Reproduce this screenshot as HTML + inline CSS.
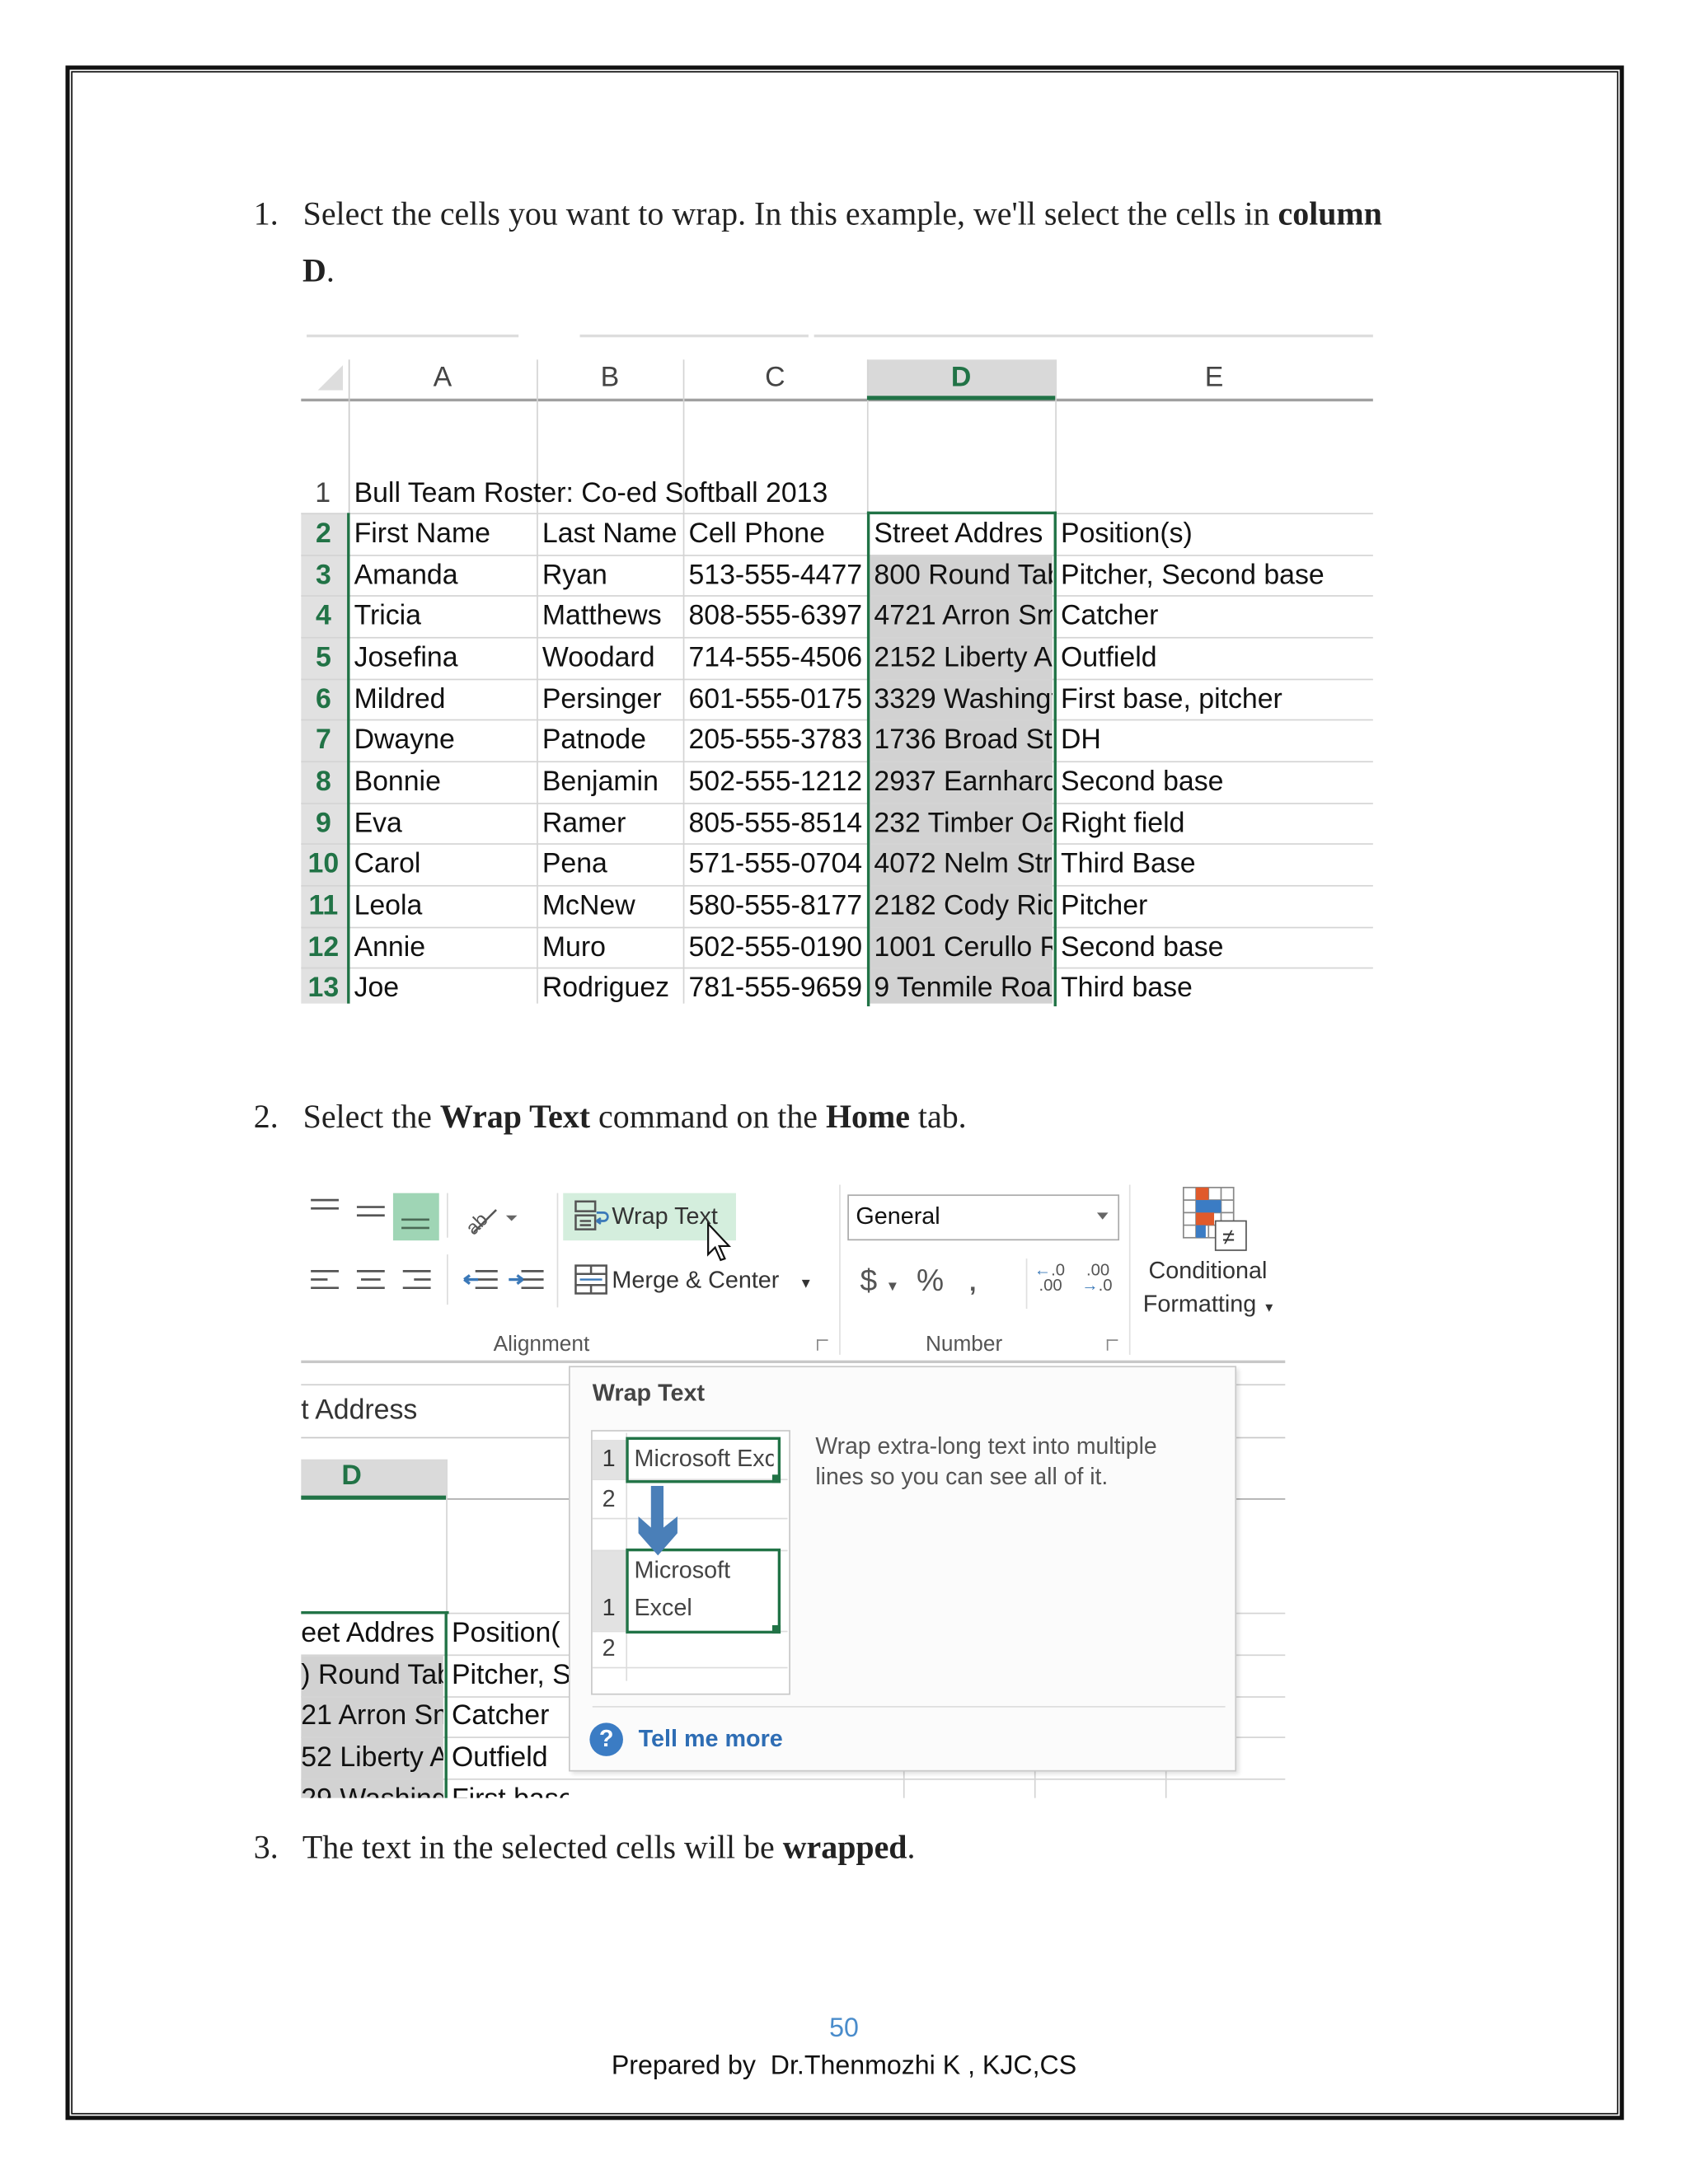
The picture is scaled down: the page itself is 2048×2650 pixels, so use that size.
<!DOCTYPE html>
<html><head><meta charset="utf-8">
<style>
html,body{margin:0;padding:0;background:#fff;}
body{width:2048px;height:2650px;overflow:hidden;position:relative;}
#c{position:absolute;left:0;top:0;width:1211px;height:1567px;transform:scale(1.6912);transform-origin:0 0;}
.a{position:absolute;white-space:nowrap;}
.s{font-family:"Liberation Serif",serif;font-size:23.6px;color:#222;}
.x{font-family:"Liberation Sans",sans-serif;font-size:20px;color:#111;line-height:29.7px;}
.x > div > span:nth-child(5){width:128px;overflow:hidden}
.h{background:#bbb;position:absolute;}
.g{color:#217346;font-weight:bold;}
.rib{font-family:"Liberation Sans",sans-serif;font-size:17px;color:#333;}
</style></head><body><div id="c">
<!-- border -->
<div class="a" style="left:47px;top:47px;width:1112px;height:1468px;border:3px solid #111;"></div>
<div class="a" style="left:51px;top:51px;width:1108px;height:1464px;border:1px solid #111;"></div>

<div class="a s" style="left:182px;top:141px;">1.&nbsp;&nbsp; Select the cells you want to wrap. In this example, we'll select the cells in <b>column</b></div>
<div class="a s" style="left:217px;top:182px;"><b>D</b>.</div>

<!-- spreadsheet 1 -->
<div class="h" style="left:220px;top:240px;width:152px;height:2px;background:#ddd"></div>
<div class="h" style="left:416px;top:240px;width:164px;height:2px;background:#ddd"></div>
<div class="h" style="left:584px;top:240px;width:401px;height:2px;background:#ddd"></div>
<div class="a" style="left:216px;top:368px;width:34px;height:352px;background:#e1e1e1"></div>
<div class="a" style="left:622px;top:258px;width:135px;height:28px;background:#d9d9d9"></div>
<div class="a" style="left:624px;top:398px;width:131px;height:322px;background:#d2d2d2"></div>
<div class="a" style="left:228px;top:262px;width:0;height:0;border-left:18px solid transparent;border-bottom:18px solid #ddd"></div>
<div class="h" style="left:216px;top:286px;width:769px;height:2px;background:#a0a0a0"></div>
<div class="h" style="left:250px;top:258px;width:1px;height:462px;background:#ccc"></div>
<div class="h" style="left:385px;top:258px;width:1px;height:462px;background:#d4d4d4"></div>
<div class="h" style="left:490px;top:258px;width:1px;height:462px;background:#d4d4d4"></div>
<div class="h" style="left:622px;top:258px;width:1px;height:110px;background:#d4d4d4"></div>
<div class="h" style="left:757px;top:258px;width:1px;height:110px;background:#d4d4d4"></div>
<div class="h" style="left:622px;top:284px;width:135px;height:3px;background:#217346"></div>
<div class="a x" style="left:250px;top:257px;width:135px;text-align:center;color:#444">A</div>
<div class="a x" style="left:385px;top:257px;width:105px;text-align:center;color:#444">B</div>
<div class="a x" style="left:490px;top:257px;width:132px;text-align:center;color:#444">C</div>
<div class="a x g" style="left:622px;top:257px;width:135px;text-align:center;">D</div>
<div class="a x" style="left:757px;top:257px;width:228px;text-align:center;color:#444">E</div>
<!-- row lines -->
<div class="h" style="left:216px;top:368px;width:769px;height:1px;background:#d4d4d4"></div>
<div class="h" style="left:216px;top:398px;width:769px;height:1px;background:#d4d4d4"></div>
<div class="h" style="left:216px;top:427px;width:769px;height:1px;background:#d4d4d4"></div>
<div class="h" style="left:216px;top:457px;width:769px;height:1px;background:#d4d4d4"></div>
<div class="h" style="left:216px;top:487px;width:769px;height:1px;background:#d4d4d4"></div>
<div class="h" style="left:216px;top:516px;width:769px;height:1px;background:#d4d4d4"></div>
<div class="h" style="left:216px;top:546px;width:769px;height:1px;background:#d4d4d4"></div>
<div class="h" style="left:216px;top:576px;width:769px;height:1px;background:#d4d4d4"></div>
<div class="h" style="left:216px;top:605px;width:769px;height:1px;background:#d4d4d4"></div>
<div class="h" style="left:216px;top:635px;width:769px;height:1px;background:#d4d4d4"></div>
<div class="h" style="left:216px;top:665px;width:769px;height:1px;background:#d4d4d4"></div>
<div class="h" style="left:216px;top:694px;width:769px;height:1px;background:#d4d4d4"></div>
<div class="h" style="left:249px;top:368px;width:2px;height:352px;background:#217346"></div>
<div class="a" style="left:622px;top:367px;width:132px;height:353px;border:2px solid #217346;border-bottom:none"></div>
<div class="a x" style="left:226px;top:340px;color:#444">1</div>
<div class="a x" style="left:254px;top:340px;">Bull Team Roster: Co-ed Softball 2013</div>
<div class="a x" style="left:216px;top:369px;"><div style="position:relative"><span class="a g" style="left:0;width:32px;text-align:center">2</span><span class="a" style="left:38px">First Name</span><span class="a" style="left:173px">Last Name</span><span class="a" style="left:278px">Cell Phone</span><span class="a" style="left:411px">Street Addres</span><span class="a" style="left:545px">Position(s)</span></div></div>
<div class="a x" style="left:216px;top:399px;"><div style="position:relative"><span class="a g" style="left:0;width:32px;text-align:center">3</span><span class="a" style="left:38px">Amanda</span><span class="a" style="left:173px">Ryan</span><span class="a" style="left:278px">513-555-4477</span><span class="a" style="left:411px">800 Round Tab</span><span class="a" style="left:545px">Pitcher, Second base</span></div></div>
<div class="a x" style="left:216px;top:428px;"><div style="position:relative"><span class="a g" style="left:0;width:32px;text-align:center">4</span><span class="a" style="left:38px">Tricia</span><span class="a" style="left:173px">Matthews</span><span class="a" style="left:278px">808-555-6397</span><span class="a" style="left:411px">4721 Arron Sm</span><span class="a" style="left:545px">Catcher</span></div></div>
<div class="a x" style="left:216px;top:458px;"><div style="position:relative"><span class="a g" style="left:0;width:32px;text-align:center">5</span><span class="a" style="left:38px">Josefina</span><span class="a" style="left:173px">Woodard</span><span class="a" style="left:278px">714-555-4506</span><span class="a" style="left:411px">2152 Liberty A</span><span class="a" style="left:545px">Outfield</span></div></div>
<div class="a x" style="left:216px;top:488px;"><div style="position:relative"><span class="a g" style="left:0;width:32px;text-align:center">6</span><span class="a" style="left:38px">Mildred</span><span class="a" style="left:173px">Persinger</span><span class="a" style="left:278px">601-555-0175</span><span class="a" style="left:411px">3329 Washingt</span><span class="a" style="left:545px">First base, pitcher</span></div></div>
<div class="a x" style="left:216px;top:517px;"><div style="position:relative"><span class="a g" style="left:0;width:32px;text-align:center">7</span><span class="a" style="left:38px">Dwayne</span><span class="a" style="left:173px">Patnode</span><span class="a" style="left:278px">205-555-3783</span><span class="a" style="left:411px">1736 Broad Str</span><span class="a" style="left:545px">DH</span></div></div>
<div class="a x" style="left:216px;top:547px;"><div style="position:relative"><span class="a g" style="left:0;width:32px;text-align:center">8</span><span class="a" style="left:38px">Bonnie</span><span class="a" style="left:173px">Benjamin</span><span class="a" style="left:278px">502-555-1212</span><span class="a" style="left:411px">2937 Earnhard</span><span class="a" style="left:545px">Second base</span></div></div>
<div class="a x" style="left:216px;top:577px;"><div style="position:relative"><span class="a g" style="left:0;width:32px;text-align:center">9</span><span class="a" style="left:38px">Eva</span><span class="a" style="left:173px">Ramer</span><span class="a" style="left:278px">805-555-8514</span><span class="a" style="left:411px">232 Timber Oa</span><span class="a" style="left:545px">Right field</span></div></div>
<div class="a x" style="left:216px;top:606px;"><div style="position:relative"><span class="a g" style="left:0;width:32px;text-align:center">10</span><span class="a" style="left:38px">Carol</span><span class="a" style="left:173px">Pena</span><span class="a" style="left:278px">571-555-0704</span><span class="a" style="left:411px">4072 Nelm Str</span><span class="a" style="left:545px">Third Base</span></div></div>
<div class="a x" style="left:216px;top:636px;"><div style="position:relative"><span class="a g" style="left:0;width:32px;text-align:center">11</span><span class="a" style="left:38px">Leola</span><span class="a" style="left:173px">McNew</span><span class="a" style="left:278px">580-555-8177</span><span class="a" style="left:411px">2182 Cody Rid</span><span class="a" style="left:545px">Pitcher</span></div></div>
<div class="a x" style="left:216px;top:666px;"><div style="position:relative"><span class="a g" style="left:0;width:32px;text-align:center">12</span><span class="a" style="left:38px">Annie</span><span class="a" style="left:173px">Muro</span><span class="a" style="left:278px">502-555-0190</span><span class="a" style="left:411px">1001 Cerullo R</span><span class="a" style="left:545px">Second base</span></div></div>
<div class="a" style="left:216px;top:695px;width:769px;height:25px;overflow:hidden"><div class="x"><div style="position:relative"><span class="a g" style="left:0;width:32px;text-align:center">13</span><span class="a" style="left:38px">Joe</span><span class="a" style="left:173px">Rodriguez</span><span class="a" style="left:278px">781-555-9659</span><span class="a" style="left:411px">9 Tenmile Roa</span><span class="a" style="left:545px">Third base</span></div></div></div>

<div class="a s" style="left:182px;top:789px;">2.&nbsp;&nbsp; Select the <b>Wrap Text</b> command on the <b>Home</b> tab.</div>

<!-- ribbon -->
<div class="a" style="left:282px;top:856px;width:33px;height:34px;background:#9fd5b5"></div>
<div class="a" style="left:404px;top:856px;width:124px;height:34px;background:#d4eedd"></div>
<svg class="a" style="left:216px;top:848px" width="400" height="100" viewBox="0 0 400 100">
<g stroke="#555" stroke-width="1.6">
<path d="M7 13h20M7 19h20"/><path d="M40 18h20M40 24h20"/><path d="M72 27h20M72 33h20" stroke="#4a6a55"/>
<path d="M7 64h20M7 70h12M7 76h20"/><path d="M40 64h20M43 70h14M40 76h20"/><path d="M73 64h20M81 70h12M73 76h20"/>
<path d="M125 64h16M125 70h16M125 76h16"/><path d="M158 64h16M158 70h16M158 76h16"/>
</g>
<path d="M117 70h10M117 70l4-3M117 70l4 3" stroke="#3a78b8" stroke-width="2" fill="none"/>
<path d="M149 70h10M159 70l-4-3M159 70l-4 3" stroke="#3a78b8" stroke-width="2" fill="none"/>
<text x="116" y="32" font-family="Liberation Sans" font-size="14" fill="#555" transform="rotate(-45 128 26)">ab</text>
<path d="M124 36l16-16" stroke="#555" stroke-width="1.5"/>
<path d="M147 24l4 4 4-4z" fill="#666"/>
<line x1="105" y1="8" x2="105" y2="40" stroke="#ddd"/><line x1="105" y1="52" x2="105" y2="88" stroke="#ddd"/>
<line x1="184" y1="8" x2="184" y2="90" stroke="#ddd"/>
<g stroke="#555" stroke-width="1.5" fill="none">
<rect x="197" y="14" width="14" height="7"/><rect x="197" y="24" width="14" height="10"/><path d="M200 28h8M200 31h8"/>
<rect x="197" y="60" width="22" height="20"/><path d="M197 66h22M197 74h22M208 60v6M208 74v6"/>
</g>
<path d="M212 22h5a3 3 0 0 1 0 6h-5M212 28l3-2M212 28l3 2" stroke="#3a78b8" stroke-width="1.6" fill="none"/>
<path d="M200 70h16" stroke="#3a78b8" stroke-width="1.4"/>
</svg>
<div class="a rib" style="left:439px;top:863px;">Wrap Text</div>
<div class="a rib" style="left:439px;top:909px;">Merge &amp; Center&nbsp;&nbsp;&nbsp;<span style="font-size:10px">▼</span></div>
<svg class="a" style="left:506px;top:876px" width="24" height="34"><path d="M2 2v22l5-5 4 9 3-1-4-9h7z" fill="#fff" stroke="#111" stroke-width="1.3"/></svg>
<div class="a rib" style="left:354px;top:956px;font-size:15.5px;color:#555">Alignment</div>
<div class="a rib" style="left:664px;top:956px;font-size:15.5px;color:#555">Number</div>
<div class="a" style="left:586px;top:961px;width:7px;height:7px;border-left:1px solid #888;border-top:1px solid #888"></div>
<div class="a" style="left:794px;top:961px;width:7px;height:7px;border-left:1px solid #888;border-top:1px solid #888"></div>
<div class="a" style="left:602px;top:850px;width:1px;height:122px;background:#e0e0e0"></div>
<div class="a" style="left:810px;top:850px;width:1px;height:122px;background:#e0e0e0"></div>
<div class="a" style="left:736px;top:903px;width:1px;height:36px;background:#e0e0e0"></div>
<div class="a" style="left:608px;top:857px;width:193px;height:31px;border:1px solid #aaa;background:#fff"></div>
<div class="a rib" style="left:614px;top:863px;color:#111">General</div>
<div class="a" style="left:787px;top:870px;border-left:4px solid transparent;border-right:4px solid transparent;border-top:5px solid #666"></div>
<div class="a rib" style="left:617px;top:906px;font-size:22px;color:#555">$ <span style="font-size:10px">▼</span>&nbsp;&nbsp;%&nbsp;&nbsp;&nbsp;<b style="font-size:18px">,</b></div>
<div class="a" style="left:742px;top:906px;font-family:'Liberation Sans';font-size:12px;line-height:11px;color:#555"><span style="color:#3a78b8">←</span>.0<br>&nbsp;.00</div>
<div class="a" style="left:776px;top:906px;font-family:'Liberation Sans';font-size:12px;line-height:11px;color:#555">&nbsp;.00<br><span style="color:#3a78b8">→</span>.0</div>
<svg class="a" style="left:848px;top:851px" width="50" height="48">
<g fill="none" stroke="#888" stroke-width="1"><rect x="1" y="1" width="36" height="36"/><path d="M1 10h36M1 19h36M1 28h36M10 1v36M19 1v36M28 1v36"/></g>
<rect x="10" y="1" width="9" height="9" fill="#e05a2b"/><rect x="10" y="10" width="18" height="9" fill="#3b7cc4"/><rect x="10" y="19" width="13" height="9" fill="#e05a2b"/><rect x="10" y="28" width="7" height="9" fill="#3b7cc4"/>
<rect x="24" y="25" width="22" height="21" fill="#fff" stroke="#555"/><text x="29" y="42" font-family="Liberation Sans" font-size="16" fill="#333">≠</text>
</svg>
<div class="a rib" style="left:824px;top:902px;">Conditional</div>
<div class="a rib" style="left:820px;top:926px;">Formatting <span style="font-size:9px">▼</span></div>

<!-- lower sheet -->
<div class="h" style="left:216px;top:976px;width:706px;height:2px;background:#c8c8c8"></div>
<div class="h" style="left:216px;top:993px;width:706px;height:1px;background:#d0d0d0"></div>
<div class="h" style="left:216px;top:1031px;width:706px;height:1px;background:#c8c8c8"></div>
<div class="a x" style="left:216px;top:998px;color:#333">t Address</div>
<div class="a" style="left:216px;top:1047px;width:104px;height:27px;background:#dadada"></div>
<div class="h" style="left:216px;top:1073px;width:104px;height:3px;background:#217346"></div>
<div class="h" style="left:320px;top:1075px;width:602px;height:1px;background:#aaa"></div>
<div class="a x g" style="left:245px;top:1045px;">D</div>
<div class="h" style="left:320px;top:1047px;width:1px;height:110px;background:#d4d4d4"></div>
<div class="a" style="left:216px;top:1188px;width:102px;height:102px;background:#d2d2d2"></div>
<div class="h" style="left:216px;top:1157px;width:706px;height:1px;background:#d4d4d4"></div>
<div class="h" style="left:216px;top:1187px;width:706px;height:1px;background:#d4d4d4"></div>
<div class="h" style="left:216px;top:1217px;width:706px;height:1px;background:#d4d4d4"></div>
<div class="h" style="left:216px;top:1246px;width:706px;height:1px;background:#d4d4d4"></div>
<div class="h" style="left:216px;top:1276px;width:706px;height:1px;background:#d4d4d4"></div>
<div class="a" style="left:216px;top:1158px;width:192px;height:132px;overflow:hidden">
<div class="x" style="position:relative">
<span class="a" style="left:0;top:0;width:102px;overflow:hidden">eet Addres</span><span class="a" style="left:108px;top:0">Position(</span>
<span class="a" style="left:0;top:30px;width:102px;overflow:hidden">) Round Tab</span><span class="a" style="left:108px;top:30px">Pitcher, S</span>
<span class="a" style="left:0;top:59px;width:102px;overflow:hidden">21 Arron Sm</span><span class="a" style="left:108px;top:59px">Catcher</span>
<span class="a" style="left:0;top:89px;width:102px;overflow:hidden">52 Liberty A</span><span class="a" style="left:108px;top:89px">Outfield</span>
<span class="a" style="left:0;top:119px;width:102px;overflow:hidden">29 Washingt</span><span class="a" style="left:108px;top:119px">First base, pitcher</span>
</div></div>
<div class="h" style="left:216px;top:1156px;width:106px;height:2px;background:#217346"></div>
<div class="h" style="left:319px;top:1156px;width:2px;height:134px;background:#217346"></div>
<div class="h" style="left:648px;top:1270px;width:1px;height:20px;background:#d4d4d4"></div>
<div class="h" style="left:742px;top:1270px;width:1px;height:20px;background:#d4d4d4"></div>
<div class="h" style="left:836px;top:1270px;width:1px;height:20px;background:#d4d4d4"></div>

<!-- tooltip -->
<div class="a" style="left:408px;top:980px;width:477px;height:289px;background:#fbfbfb;border:1px solid #c9c9c9;box-shadow:2px 2px 3px rgba(0,0,0,0.12)"></div>
<div class="a rib" style="left:425px;top:990px;font-weight:bold;color:#444">Wrap Text</div>
<div class="a" style="left:424px;top:1026px;width:141px;height:188px;border:1px solid #c8c8c8;background:#fff"></div>
<div class="a" style="left:425px;top:1033px;width:24px;height:28px;background:#e2e2e2"></div>
<div class="a" style="left:425px;top:1112px;width:24px;height:58px;background:#e2e2e2"></div>
<div class="h" style="left:425px;top:1061px;width:140px;height:1px;background:#ddd"></div>
<div class="h" style="left:425px;top:1089px;width:140px;height:1px;background:#ddd"></div>
<div class="h" style="left:425px;top:1112px;width:140px;height:1px;background:#ddd"></div>
<div class="h" style="left:425px;top:1170px;width:140px;height:1px;background:#ddd"></div>
<div class="h" style="left:425px;top:1196px;width:140px;height:1px;background:#ddd"></div>
<div class="h" style="left:449px;top:1028px;width:1px;height:178px;background:#ddd"></div>
<div class="a" style="left:449px;top:1031px;width:107px;height:29px;border:2px solid #217346"></div>
<div class="a" style="left:554px;top:1058px;width:6px;height:6px;background:#217346"></div>
<div class="a" style="left:449px;top:1111px;width:107px;height:57px;border:2px solid #217346"></div>
<div class="a" style="left:554px;top:1166px;width:6px;height:6px;background:#217346"></div>
<div class="a rib" style="left:455px;top:1037px;width:100px;overflow:hidden;color:#444">Microsoft Excel</div>
<div class="a rib" style="left:455px;top:1117px;color:#444">Microsoft</div>
<div class="a rib" style="left:455px;top:1144px;color:#444">Excel</div>
<div class="a rib g" style="left:432px;top:1037px;font-weight:normal">1</div>
<div class="a rib" style="left:432px;top:1066px;color:#444">2</div>
<div class="a rib g" style="left:432px;top:1144px;font-weight:normal">1</div>
<div class="a rib" style="left:432px;top:1173px;color:#444">2</div>
<svg class="a" style="left:452px;top:1066px" width="40" height="52"><path d="M15 0h9v30l10-8v12l-14 16-14-16v-12l9 8z" fill="#4a7fb8"/></svg>
<div class="a rib" style="left:585px;top:1027px;font-size:16.8px;line-height:22px;color:#555">Wrap extra-long text into multiple<br>lines so you can see all of it.</div>
<div class="h" style="left:425px;top:1224px;width:454px;height:1px;background:#ddd"></div>
<div class="a" style="left:423px;top:1236px;width:24px;height:24px;border-radius:50%;background:#3b7cc4;color:#fff;font:bold 17px/24px 'Liberation Sans',sans-serif;text-align:center">?</div>
<div class="a rib" style="left:458px;top:1238px;font-weight:bold;color:#2e6db4">Tell me more</div>

<div class="a s" style="left:182px;top:1313px;">3.&nbsp;&nbsp; The text in the selected cells will be <b>wrapped</b>.</div>

<div class="a" style="left:0;width:1211px;top:1445px;text-align:center;font-family:'Liberation Sans',sans-serif;font-size:19px;color:#4a8ccb">50</div>
<div class="a" style="left:0;width:1211px;top:1472px;text-align:center;font-family:'Liberation Sans',sans-serif;font-size:19px;color:#111">Prepared by&nbsp; Dr.Thenmozhi K , KJC,CS</div>
</div></body></html>
